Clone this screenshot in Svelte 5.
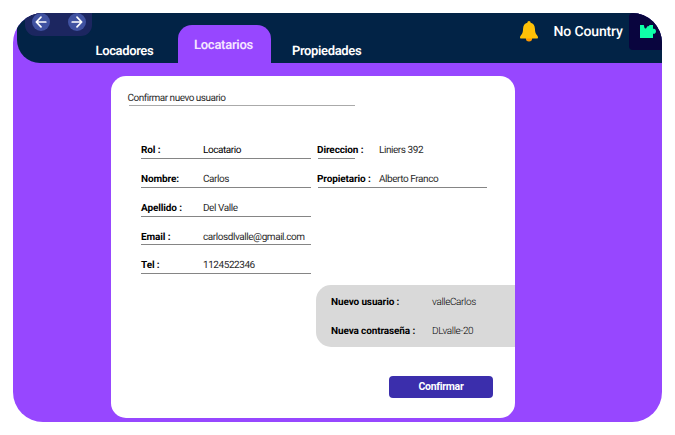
<script>
  const left = [
    { label: 'Rol :', value: 'Locatario' },
    { label: 'Nombre:', value: 'Carlos' },
    { label: 'Apellido :', value: 'Del Valle' },
    { label: 'Email :', value: 'carlosdlvalle@gmail.com' },
    { label: 'Tel :', value: '1124522346' },
  ];
  const right = [
    { label: 'Direccion :', value: 'Liniers 392', width: 37 },
    { label: 'Propietario :', value: 'Alberto Franco', width: 169 },
  ];
</script>

<div class="frame">
  <header>
    <div class="history">
      <button aria-label="Atrás"><svg viewBox="0 0 18 18"><path d="M13.8 9H4.5M9 4.2 4.3 9 9 13.8" /></svg></button>
      <button aria-label="Adelante"><svg viewBox="0 0 18 18"><path d="M4.2 9h9.3M9 4.2 13.7 9 9 13.8" /></svg></button>
    </div>
    <nav>
      <a class="loc">Locadores</a>
      <a class="active">Locatarios</a>
      <a class="prop">Propiedades</a>
    </nav>
    <div class="account">
      <svg class="bell" viewBox="0 0 18 21">
        <path d="M5.8 17a3.2 3.6 0 0 0 6.4 0z" fill="#ff9800" />
        <path d="M9 0c-1 0-1.6.7-1.6 1.8C4.5 2.4 3.2 4.8 3.1 7.6 3 11.5 2.2 13.2.8 14.6.2 15.2 0 15.8 0 16.4c0 .7.4 1.1 1 1.1h16c.6 0 1-.4 1-1.1 0-.6-.2-1.2-.8-1.8-1.4-1.4-2.2-3.1-2.3-7-.1-2.8-1.4-5.2-4.3-5.8C10.6.7 10 0 9 0z" fill="#ffc107" />
      </svg>
      <span>No Country</span>
      <div class="logo">
        <svg viewBox="0 0 16 13"><path d="M0 0h3.8l.6 2.6c.2.8.8 1.100 1.400.9.700-.2.800-.8 1.100-1.400.4-.8 1.200-.9 1.900-1.100L9.700 0H13v3.700h.9c1.200 0 2.100 1 2.100 2.500s-.9 2.600-2.100 2.600H13V13H0z" /></svg>
      </div>
    </div>
  </header>

  <main>
    <h1>Confirmar nuevo usuario</h1>
    <section class="fields">
      <div class="column">
        {#each left as f}
          <div class="field">
            <b>{f.label}</b><span>{f.value}</span>
          </div>
        {/each}
      </div>
      <div class="column second">
        {#each right as f}
          <div class="field">
            <b>{f.label}</b><span>{f.value}</span>
            <i style="width: {f.width}px"></i>
          </div>
        {/each}
      </div>
    </section>
    <section class="credentials">
      <div><b>Nuevo usuario :</b><span>valleCarlos</span></div>
      <div><b>Nueva contraseña :</b><span>DLvalle-20</span></div>
    </section>
    <button class="confirm">Confirmar</button>
  </main>
</div>

<style>
  :global(body) { background: #fff; }
  * { box-sizing: border-box; }
  button { border: 0; padding: 0; font: inherit; }
  svg { display: block; }
  .frame {
    width: 649px;
    height: 409px;
    margin: 13px;
    overflow: hidden;
    border-radius: 30px;
    background: #9747ff;
    font-family: Roboto, "Liberation Sans", sans-serif;
    text-rendering: geometricPrecision;
    display: flex;
    flex-direction: column;
  }
  header {
    height: 49.5px;
    flex: none;
    margin-left: 4px;
    display: flex;
    background: #022346;
    border-bottom-left-radius: 23px;
    color: #fff;
  }
  .history {
    width: 67px;
    height: 22.5px;
    margin-left: 8px;
    padding: 0 6px 5px 7px;
    display: flex;
    justify-content: space-between;
    align-items: flex-end;
    background: #1c2660;
    border-radius: 0 0 11px 11px;
  }
  .history button {
    width: 18px;
    height: 18px;
    border-radius: 50%;
    background: #4052a1;
  }
  .history path { fill: none; stroke: #fff; stroke-width: 1.7; stroke-linecap: round; stroke-linejoin: round; }
  nav {
    display: flex;
    align-items: flex-end;
    font-size: 13px;
    font-weight: 600;
    letter-spacing: -0.36px;
    line-height: 16px;
    white-space: nowrap;
  }
  nav a { display: block; }
  .loc { width: 85.5px; padding: 0 0 3px 3.5px; }
  .active {
    width: 93.5px;
    height: 37.5px;
    padding: 12.5px 0 0 16.5px;
    border-radius: 14px 14px 0 0;
    background: #9747ff;
    color: #f5e6ff;
    letter-spacing: -0.26px;
  }
  .prop { padding: 0 0 3px 21px; }
  .account {
    margin-left: auto;
    display: flex;
    font-size: 14px;
    font-weight: 500;
    letter-spacing: -0.14px;
  }
  .bell { width: 18px; height: 21px; margin: 8px 16px 0 0; }
  .account span { width: 75.5px; line-height: 16px; padding-top: 11px; white-space: nowrap; }
  .logo {
    width: 33px;
    height: 37px;
    padding: 12px 0 0 11px;
    border-radius: 4px 0 0 4px;
    background: #09053e;
  }
  .logo svg { width: 16px; height: 13px; fill: #0fffa8; }
  main {
    width: 404px;
    height: 342px;
    margin: 13.5px 0 0 98px;
    background: #fff;
    border-radius: 15px;
    display: flex;
    flex-direction: column;
    color: #000;
    font-size: 10px;
    line-height: 14px;
    white-space: nowrap;
  }
  h1 {
    width: 226px;
    height: 14px;
    margin: 16px 0 0 18px;
    font-size: 10px;
    line-height: 14px;
    font-weight: 400;
    letter-spacing: -0.5px;
    border-bottom: 1px solid #aaa;
    text-indent: -1.5px;
    color: #2b2b2b;
  }
  .fields { display: flex; margin: 38px 0 0 30px; height: 141px; }
  .column { width: 169.5px; }
  .second { margin-left: 6.5px; width: 170px; }
  .field {
    position: relative;
    height: 15px;
    margin-bottom: 13.75px;
    padding-top: 0.4px;
    display: flex;
    border-bottom: 1px solid #858585;
  }
  .field b { width: 62px; flex: none; }
  b { font-weight: 700; letter-spacing: -0.12px; }
  .field span, .credentials span { font-weight: 400; color: #2b2b2b; letter-spacing: -0.44px; }
  .column:first-child .field:first-child span { color: #000; }
  .second .field { border-bottom: 0; }
  .second i { position: absolute; left: 1px; bottom: 0; height: 1px; background: #858585; }
  .credentials {
    width: 199px;
    height: 62px;
    margin-left: auto;
    padding: 10.6px 0 0 15px;
    background: #d9d9d9;
    border-radius: 15px 0 0 15px;
  }
  .credentials div { display: flex; height: 29px; }
  .credentials b { width: 101px; }
  .credentials span { font-weight: 300; color: #000; letter-spacing: -0.36px; }
  .confirm {
    width: 104px;
    height: 22px;
    margin: 29px 0 0 278px;
    padding-top: 0.5px;
    border-radius: 4px;
    background: #3b2eac;
    color: #fff;
    font-size: 10.5px;
    letter-spacing: -0.3px;
    font-weight: 700;
  }
</style>
